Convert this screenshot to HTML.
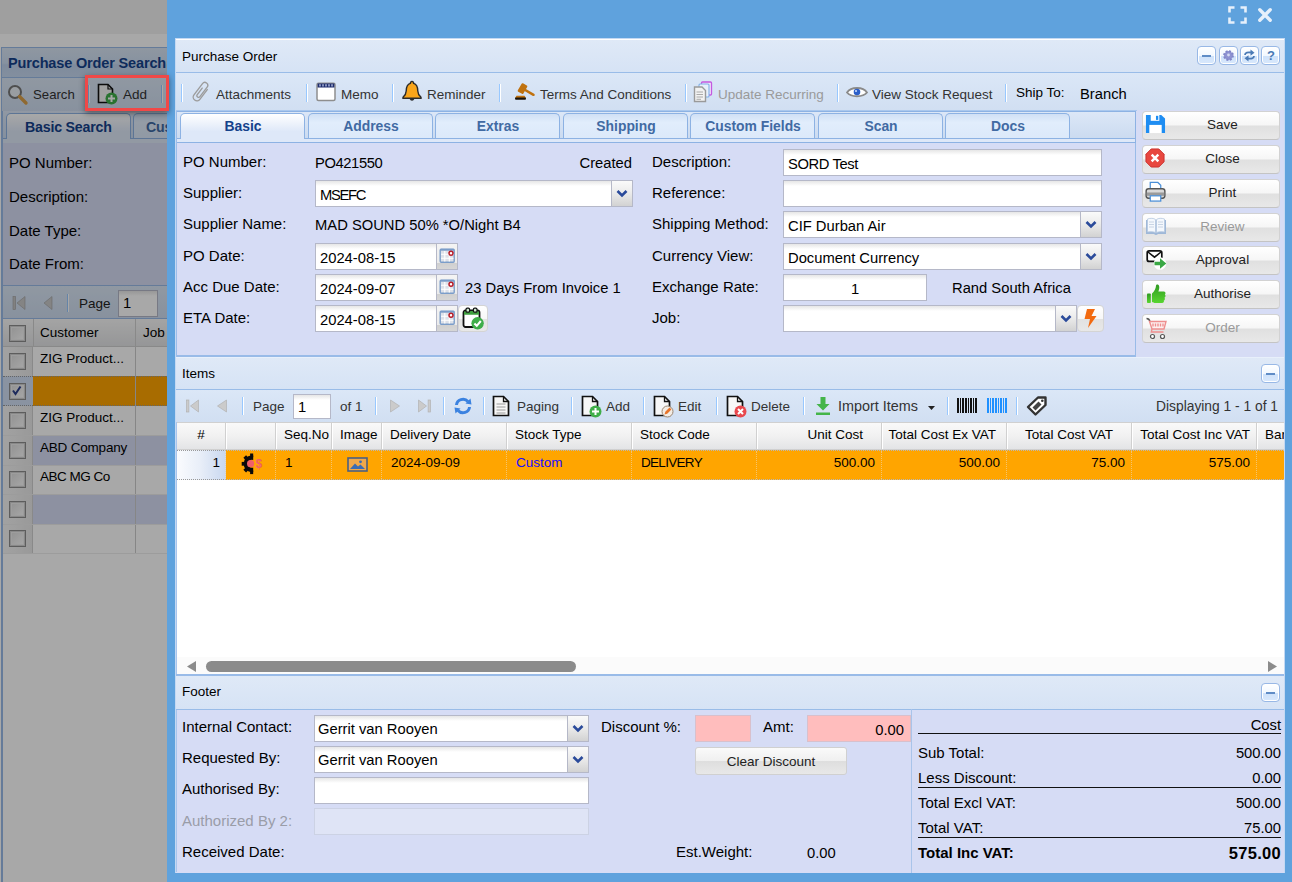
<!DOCTYPE html>
<html><head><meta charset="utf-8"><title>Purchase Order</title>
<style>
*{box-sizing:border-box;margin:0;padding:0}
html,body{width:1292px;height:882px;overflow:hidden}
body{background:#a8a8a8;font-family:"Liberation Sans",sans-serif;font-size:13.5px;color:#000;position:relative}
.abs{position:absolute}
.t{position:absolute;white-space:nowrap;line-height:1}
.lbl{position:absolute;white-space:nowrap;font-size:15px;line-height:18px;color:#000}
.val{position:absolute;white-space:nowrap;font-size:14.75px;line-height:18px}
.inp{position:absolute;background:#fff;border:1px solid #b5b8c8;height:27px;font-size:14.75px;line-height:28px;padding-left:4px;white-space:nowrap;background-image:linear-gradient(#e6e6e6,#fff 5px)}
.trg{position:absolute;width:21px;height:25px;right:0;top:0;border-left:1px solid #b5b8c8;background:linear-gradient(#fafafa,#ececec 45%,#d2d2d2)}
.sep{position:absolute;width:2px;height:18px;border-left:1px solid #98c8ff;border-right:1px solid #fff}
/* modal */
#modal{left:167px;top:0;width:1125px;height:882px;background:#5fa2dd}
#panel{left:176px;top:39px;width:1108px;height:834px;background:#d6dcf5;overflow:hidden}
.hdr{position:absolute;left:0;width:1108px;height:33px;background:linear-gradient(#dfe9f7,#d6e3f5);border-bottom:1px solid #99bce8;border-top:1px solid #e8f0fb;font-size:13.5px}
.tb{position:absolute;left:0;width:1108px;background:#d3e1f4;}
.tool{position:absolute;width:19px;height:19px;border:1px solid #98b8e6;border-radius:4px;background:linear-gradient(#fff,#f2f8ff 50%,#cfe2fa 55%,#d8e8fc);box-shadow:inset 0 0 0 1px #fff}

.hl{left:3px;width:170px;height:1px;background:#ededed}
.cb{position:absolute;left:9px;width:17px;height:17px;border:1px solid #8e8e8e;background:linear-gradient(135deg,#dcdcdc,#fff);box-shadow:inset 0 0 0 1px #cfcfcf,inset 0 0 0 2px #efefef}
.tabA{border:1px solid #8db2e3;border-bottom:none;border-radius:5px 5px 0 0;background:linear-gradient(#fff,#dee8f8 70%)}
.tabI{border:1px solid #8db2e3;border-bottom:none;border-radius:5px 5px 0 0;background:linear-gradient(#d0e0f5,#e1edfc 35%,#dce9fa)}

.tbt{font-size:13.5px;color:#333}
.tabt{top:81px;width:126px;text-align:center;font-weight:bold;font-size:13.9px;color:#416aa3}
.rbtn{position:absolute;left:966px;width:138px;height:29px;border:1px solid #d2d2d2;border-bottom-color:#c4c4c4;border-radius:4px;background:linear-gradient(#ffffff,#f6f6f6 48%,#e0e0e0 52%,#e8e8e8);}

.cal{background:linear-gradient(#f4f4f4,#ebebeb 76%,#d0d0d0 78%,#d6d6d6)}
.ibtn{position:absolute;height:27px;border:1px solid #d4d4d4;border-radius:4px;background:linear-gradient(#ffffff,#f7f7f7 50%,#e2e2e2 54%,#e8e8e8)}

.gt{font-size:13.5px;color:#000}
</style></head><body>
<!-- LEFT BACKGROUND (dimmed page) -->
<div class="abs" style="left:0;top:0;width:167px;height:882px;background:#fff"></div><div class="abs" style="left:0;top:0;width:167px;height:34px;background:#f2f2f2"></div>
<div class="abs" style="left:1px;top:47px;width:170px;height:835px;background:#fff;border-left:2px solid #99bbe8;border-top:1px solid #99bbe8"></div>
<!-- title -->
<div class="abs" style="left:2px;top:48px;width:170px;height:30px;background:linear-gradient(#dae6f4,#cddef3 52%,#c0d4ee 58%,#c7d9f1);border-bottom:1px solid #99bbe8"></div>
<div class="t" style="left:8px;top:56px;font-weight:bold;font-size:14.5px;color:#15428b;letter-spacing:-0.15px">Purchase Order Search</div>
<!-- toolbar -->
<div class="abs" style="left:2px;top:78px;width:170px;height:34px;background:linear-gradient(#dbe7f6,#cfddf0);border-bottom:1px solid #99bbe8"></div>
<svg class="abs" style="left:7px;top:84px" width="22" height="22" viewBox="0 0 22 22"><circle cx="8" cy="8" r="6" fill="#e8eef4" stroke="#777" stroke-width="2"/><path d="M12.5 12.5 L19 19" stroke="#d9a04a" stroke-width="3.4" stroke-linecap="round"/></svg>
<div class="t" style="left:33px;top:88px;font-size:13.2px;color:#333">Search</div>
<div class="sep" style="left:88px;top:85px"></div>
<svg class="abs" style="left:97px;top:83px" width="22" height="22" viewBox="0 0 22 22"><path d="M1.5 1.5 H11 L15.5 6 V19.5 H1.5 Z" fill="#f4f4f4" stroke="#111" stroke-width="1.6"/><path d="M11 1.5 V6 H15.5" fill="none" stroke="#111" stroke-width="1.2"/><circle cx="14.5" cy="15.5" r="6" fill="#3fae49"/><path d="M14.5 12 V19 M11 15.5 H18" stroke="#fff" stroke-width="2"/></svg>
<div class="t" style="left:123px;top:88px;font-size:13.5px;color:#333">Add</div>
<div class="sep" style="left:161px;top:85px"></div>
<!-- tabs strip -->
<div class="abs" style="left:3px;top:111px;width:170px;height:32px;background:linear-gradient(#dce7f7,#cbdbf0 85%);border-bottom:1px solid #8db2e3"></div>
<div class="abs" style="left:3px;top:138px;width:170px;height:6px;background:#dee8f8;border-top:1px solid #8db2e3;border-bottom:1px solid #8db2e3"></div>
<div class="abs tabA" style="left:6px;top:113px;width:125px;height:26px"></div>
<div class="t" style="left:25px;top:120px;font-weight:bold;font-size:14.2px;color:#15428b;letter-spacing:-0.2px">Basic Search</div>
<div class="abs tabI" style="left:133px;top:113px;width:125px;height:25px"></div>
<div class="t" style="left:146px;top:120px;font-weight:bold;font-size:14.2px;color:#416aa3;letter-spacing:-0.2px">Cus</div>
<!-- form body -->
<div class="abs" style="left:3px;top:143px;width:170px;height:144px;background:#d6dcf5;border-bottom:2px solid #99bbe8"></div>
<div class="lbl" style="left:9px;top:154px">PO Number:</div>
<div class="lbl" style="left:9px;top:188px">Description:</div>
<div class="lbl" style="left:9px;top:222px">Date Type:</div>
<div class="lbl" style="left:9px;top:255px">Date From:</div>
<!-- paging toolbar -->
<div class="abs" style="left:3px;top:286px;width:170px;height:33px;background:linear-gradient(#dbe7f6,#cfddf0);border-bottom:1px solid #99bbe8"></div>
<svg class="abs" style="left:12px;top:295px" width="16" height="16" viewBox="0 0 16 16"><rect x="1" y="1.5" width="2.6" height="13" fill="#c4c4c4" stroke="#a0a0a0" stroke-width=".6"/><path d="M13 1.5 V14.5 L5 8 Z" fill="#c8c8c8" stroke="#a0a0a0" stroke-width=".6"/></svg>
<svg class="abs" style="left:41px;top:295px" width="16" height="16" viewBox="0 0 16 16"><path d="M11 1.5 V14.5 L3 8 Z" fill="#c8c8c8" stroke="#a0a0a0" stroke-width=".6"/></svg>
<div class="sep" style="left:67px;top:294px"></div>
<div class="t" style="left:79px;top:297px;font-size:13.5px;color:#222">Page</div>
<div class="inp" style="left:118px;top:290px;width:40px;height:27px;line-height:25px">1</div>
<!-- grid header -->
<div class="abs" style="left:3px;top:319px;width:170px;height:28px;background:linear-gradient(#f9f9f9,#e3e4e6);border-bottom:1px solid #d0d0d0"></div>
<div class="abs" style="left:33px;top:319px;width:1px;height:28px;background:#d0d0d0"></div>
<div class="abs" style="left:135px;top:319px;width:1px;height:28px;background:#d0d0d0"></div>
<div class="t" style="left:40px;top:326px;font-size:13.5px">Customer</div>
<div class="t" style="left:143px;top:326px;font-size:13.5px">Job</div>
<!-- rows -->
<div class="abs" style="left:3px;top:347px;width:170px;height:207px;background:#fff"></div>
<div class="abs" style="left:3px;top:376px;width:170px;height:30px;background:#ffa500;border-top:1px dotted #999;border-bottom:1px dotted #999"></div>
<div class="abs" style="left:3px;top:436px;width:170px;height:30px;background:#d6dcf5"></div>
<div class="abs" style="left:3px;top:495px;width:170px;height:30px;background:#d6dcf5"></div>
<div class="abs" style="left:3px;top:347px;width:30px;height:207px;background:linear-gradient(90deg,#f6f6f6,#e9e9e9);border-right:1px solid #d0d0d0"></div><div class="abs" style="left:3px;top:376px;width:30px;height:30px;background:#d2e0f4;border-top:1px dotted #999;border-bottom:1px dotted #999"></div>
<div class="abs" style="left:135px;top:347px;width:1px;height:207px;background:#cccccc"></div>
<div class="abs hl" style="top:435px"></div><div class="abs hl" style="top:465px"></div><div class="abs hl" style="top:494px"></div><div class="abs hl" style="top:524px"></div><div class="abs hl" style="top:553px"></div>
<div class="t" style="left:40px;top:352px;font-size:13.5px">ZIG Product...</div>
<div class="t" style="left:40px;top:411px;font-size:13.5px">ZIG Product...</div>
<div class="t" style="left:40px;top:441px;font-size:13.5px"><span style="letter-spacing:-0.2px">ABD Company</span></div>
<div class="t" style="left:40px;top:470px;font-size:13.5px"><span style="letter-spacing:-0.5px">ABC MG Co</span></div>
<div class="cb" style="top:325px"></div><div class="cb" style="top:353px"></div>
<div class="cb" style="top:383px"><svg width="14" height="14" viewBox="0 0 14 14" style="position:absolute;left:0;top:0"><path d="M3 6.5 L5.5 10 L10.5 2.5" fill="none" stroke="#2b3f8c" stroke-width="2"/></svg></div>
<div class="cb" style="top:412px"></div><div class="cb" style="top:442px"></div><div class="cb" style="top:471px"></div><div class="cb" style="top:501px"></div><div class="cb" style="top:530px"></div>
<!-- overlay -->
<div class="abs" style="left:0;top:0;width:167px;height:882px;background:rgba(0,0,0,0.34)"></div>
<!-- red highlight -->
<div class="abs" style="left:85px;top:75px;width:84px;height:36px;border:3px solid #f04848;box-shadow:0 2px 6px rgba(0,0,0,.45);z-index:5"></div>

<!-- MODAL -->
<div class="abs" id="modal"></div><div class="abs" style="left:175px;top:38px;width:1110px;height:835px;background:#c4d9f3"></div>
<svg class="abs" style="left:1228px;top:6px" width="19" height="18" viewBox="0 0 19 18"><path d="M1.500 6.500 V1.500 H6.500 M12.500 1.500 H17.500 V6.500 M17.500 11.500 V16.500 H12.500 M6.500 16.500 H1.500 V11.500" fill="none" stroke="#e6f0fb" stroke-width="2.600"/></svg><svg class="abs" style="left:1257px;top:7px" width="16" height="16" viewBox="0 0 16 16"><path d="M2.800 2.800 L13.200 13.200 M13.200 2.800 L2.800 13.200" stroke="#e6f0fb" stroke-width="3.400" stroke-linecap="round"/></svg>
<div class="abs" id="panel">
<!-- header -->
<div class="hdr" style="top:0;height:34px;border-top:1px solid #fff"></div>
<div class="t" style="left:6px;top:11px;font-size:13.5px">Purchase Order</div>
<div class="tool" style="left:1021px;top:7px"><div class="abs" style="left:4px;top:8px;width:9px;height:2px;background:#5f8cc6"></div></div>
<div class="tool" style="left:1043px;top:7px"><svg class="abs" style="left:2px;top:2px" width="13" height="13" viewBox="0 0 13 13"><circle cx="6.5" cy="6.5" r="4.4" fill="#8f93d2" stroke="#8186c8" stroke-width="2" stroke-dasharray="2 1.45"/><circle cx="6.5" cy="6" r="1.4" fill="#d5daf2"/></svg></div>
<div class="tool" style="left:1064px;top:7px"><svg class="abs" style="left:2px;top:2px" width="13" height="13" viewBox="0 0 13 13"><path d="M2 6 C2 3.500 5 3 8 3.500" fill="none" stroke="#4a7ab5" stroke-width="1.800"/><path d="M7.500 0.500 L11.500 3.800 L7.500 6.800 Z" fill="#4a7ab5"/><path d="M11 7 C11 9.500 8 10 5 9.500" fill="none" stroke="#4a7ab5" stroke-width="1.800"/><path d="M5.500 6.200 L1.500 9.200 L5.500 12.500 Z" fill="#4a7ab5"/></svg></div>
<div class="tool" style="left:1085px;top:7px"><div class="t" style="left:5px;top:2px;font-size:13px;font-weight:bold;color:#4a7ab5">?</div></div>
<!-- toolbar -->
<div class="tb" style="top:34px;height:38px;background:linear-gradient(#dbe7f7,#d1dff2);border-bottom:1px solid #aac8ee"></div>
<div class="sep" style="left:5px;top:45px"></div>
<div class="t tbt" style="left:40px;top:49px">Attachments</div>
<div class="sep" style="left:130px;top:45px"></div>
<div class="t tbt" style="left:165px;top:49px">Memo</div>
<div class="sep" style="left:216px;top:45px"></div>
<div class="t tbt" style="left:251px;top:49px">Reminder</div>
<div class="sep" style="left:323px;top:45px"></div>
<div class="t tbt" style="left:364px;top:49px">Terms And Conditions</div>
<div class="sep" style="left:509px;top:45px"></div>
<div class="t tbt" style="left:542px;top:49px;color:#9a9a9a">Update Recurring</div>
<div class="sep" style="left:661px;top:45px"></div>
<div class="t tbt" style="left:696px;top:49px">View Stock Request</div>
<div class="sep" style="left:829px;top:45px"></div>
<div class="t" style="left:840px;top:47px;font-size:13.5px">Ship To:</div>
<div class="t" style="left:904px;top:48px;font-size:14.75px">Branch</div>
<svg class="abs" style="left:14px;top:42px" width="22" height="22" viewBox="0 0 22 22"><g transform="translate(11,10.700) rotate(37)"><path d="M3.700 -5.500 L3.700 6.800 A3.700 3.700 0 0 1 -3.700 6.800 L-3.700 -7.400 A2.900 2.900 0 0 1 2.100 -7.400 L2.100 4.600 A1.650 1.650 0 0 1 -1.200 4.600 L-1.200 -3.600" fill="none" stroke="#9c9c9c" stroke-width="1.350" stroke-linecap="round"/></g></svg><svg class="abs" style="left:140px;top:43px" width="20" height="20" viewBox="0 0 20 20"><rect x="1" y="1.2" width="18" height="17.3" rx="1.5" fill="#fff" stroke="#8e8e8e" stroke-width="1.5"/><rect x="1.6" y="1.5" width="16.8" height="4" fill="#1e2d6e"/><path d="M4 2.2 V4.6 M7 2.2 V4.6 M10 2.2 V4.6 M13 2.2 V4.6 M16 2.2 V4.6" stroke="#dfe6ff" stroke-width="1.1"/></svg><svg class="abs" style="left:225px;top:41px" width="22" height="23" viewBox="0 0 22 23"><path d="M11 1.5 C9.8 1.5 9.3 2.4 9.4 3.4 C6.2 4.4 5.2 7.5 5.2 11 C5.2 14 3.8 15.6 2 17.2 L2 18.3 H20 V17.2 C18.2 15.6 16.8 14 16.8 11 C16.8 7.5 15.8 4.4 12.6 3.4 C12.7 2.4 12.2 1.5 11 1.5 Z" fill="#f9a51a" stroke="#2a2a2a" stroke-width="1.4"/><path d="M8.7 19 A2.4 2.4 0 0 0 13.3 19 Z" fill="#2a2a2a"/></svg><svg class="abs" style="left:337px;top:42px" width="23" height="21" viewBox="0 0 23 21"><rect x="-3.200" y="-4.800" width="6.400" height="9.600" rx="1" fill="#c0720f" transform="translate(9.500,7.600) rotate(30)"/><path d="M10.500 8 L20.500 13.800" stroke="#c0720f" stroke-width="2.500" stroke-linecap="round"/><path d="M3.500 14.800 H11.500 L13 17 H2 Z" fill="#c0720f"/><rect x="2" y="16.600" width="11" height="2.200" rx="1" fill="#1a1208"/></svg><svg class="abs" style="left:517px;top:42px" width="21" height="22" viewBox="0 0 21 22"><rect x="8.5" y="1" width="10" height="13" rx="1" fill="#f0e6fb" stroke="#c45ae0" stroke-width="1.3"/><rect x="6" y="3" width="10" height="13" rx="1" fill="#e8f0fb" stroke="#7fb0e8" stroke-width="1.1"/><path d="M1.5 6 H9 L12.5 9.5 V20.5 H1.5 Z" fill="#f2f2f2" stroke="#9a9a9a" stroke-width="1.4"/><path d="M3.5 11 H10 M3.5 13.5 H10 M3.5 16 H10 M3.5 18.3 H8" stroke="#aaa" stroke-width="1"/></svg><svg class="abs" style="left:670px;top:47px" width="22" height="13" viewBox="0 0 22 13"><path d="M1 6.5 C5 0.5 17 0.5 21 6.5 C17 11.5 5 11.5 1 6.5 Z" fill="#fff" stroke="#8a8a8a" stroke-width="1.8"/><circle cx="11" cy="6" r="3.3" fill="#2c5fc9"/><circle cx="10" cy="5" r="1" fill="#cfe0ff"/></svg>
<!-- tab strip -->
<div class="abs" style="left:0;top:72px;width:960px;height:32px;background:linear-gradient(#dce7f7,#cbdbf0 85%);border-right:1px solid #8db2e3;border-top:1px solid #8db2e3"></div>
<div class="abs" style="left:0;top:99px;width:960px;height:5px;background:#dee8f8;border-top:1px solid #8db2e3;border-bottom:1px solid #8db2e3;border-right:1px solid #8db2e3"></div>
<div class="abs tabA" style="left:4px;top:74px;width:125px;height:26px"></div>
<div class="abs tabI" style="left:132px;top:74px;width:125px;height:25px"></div>
<div class="abs tabI" style="left:259px;top:74px;width:125px;height:25px"></div>
<div class="abs tabI" style="left:387px;top:74px;width:125px;height:25px"></div>
<div class="abs tabI" style="left:514px;top:74px;width:125px;height:25px"></div>
<div class="abs tabI" style="left:642px;top:74px;width:125px;height:25px"></div>
<div class="abs tabI" style="left:769px;top:74px;width:125px;height:25px"></div>
<div class="t tabt" style="left:4px;color:#15428b">Basic</div>
<div class="t tabt" style="left:132px">Address</div>
<div class="t tabt" style="left:259px">Extras</div>
<div class="t tabt" style="left:387px">Shipping</div>
<div class="t tabt" style="left:514px">Custom Fields</div>
<div class="t tabt" style="left:642px">Scan</div>
<div class="t tabt" style="left:769px">Docs</div>
<!-- form body -->
<div class="abs" style="left:0;top:104px;width:960px;height:214px;background:#d6dcf5;border-right:1px solid #99bbe8;border-bottom:2px solid #99bbe8"></div>
<!-- right buttons column -->
<div class="abs" style="left:961px;top:71px;width:147px;height:247px;background:#d6dcf5"></div>
<div class="rbtn" style="top:72px"><div class="t" style="left:0;width:138px;padding-left:21px;text-align:center;top:6px;font-size:13.5px;color:#222">Save</div><svg class="abs" style="left:2px;top:2px" width="21" height="20" viewBox="0 0 22 22" preserveAspectRatio="none"><path d="M1 1 H17 L21 5 V21 H1 Z" fill="#1e8df2"/><rect x="4.5" y="12" width="13" height="9" fill="#fff"/><rect x="6" y="1" width="9" height="6.5" fill="#fff"/><rect x="11.5" y="2" width="2.4" height="4.5" fill="#1e8df2"/></svg></div>
<div class="rbtn" style="top:106px"><div class="t" style="left:0;width:138px;padding-left:21px;text-align:center;top:6px;font-size:13.5px;color:#222">Close</div><svg class="abs" style="left:2px;top:2px" width="20" height="20" viewBox="0 0 21 21"><path d="M6.5 1 H14.5 L20 6.5 V14.5 L14.5 20 H6.5 L1 14.5 V6.5 Z" fill="#e8473f" stroke="#c9302c" stroke-width="1"/><path d="M7 7 L14 14 M14 7 L7 14" stroke="#fff" stroke-width="2.6"/></svg></div>
<div class="rbtn" style="top:140px"><div class="t" style="left:0;width:138px;padding-left:21px;text-align:center;top:6px;font-size:13.5px;color:#222">Print</div><svg class="abs" style="left:2px;top:1px" width="21" height="22" viewBox="0 0 22 23"><path d="M5.5 8 V1.5 H13.5 L16.5 4.5 V8" fill="#fff" stroke="#4a8fd8" stroke-width="1.3"/><rect x="1.2" y="8" width="19.6" height="10" rx="2.5" fill="#d9d9d9" stroke="#555" stroke-width="1.5"/><rect x="1.8" y="12" width="18.4" height="3.5" fill="#9a9a9a"/><rect x="5.5" y="15.5" width="11" height="5.5" fill="#fff" stroke="#4a8fd8" stroke-width="1.3"/></svg></div>
<div class="rbtn" style="top:174px"><div class="t" style="left:0;width:138px;padding-left:21px;text-align:center;top:6px;font-size:13.5px;color:#9a9a9a">Review</div><svg class="abs" style="left:2px;top:3px" width="22" height="20" viewBox="0 0 22 20"><path d="M1 3 H21 V17 H13 Q11 19 9 17 H1 Z" fill="#9fb8d8"/><path d="M2.5 2 C5.5 1 8.5 1 10.5 2.5 V15.5 C8.5 14.5 5.5 14.5 2.5 15 Z M19.5 2 C16.5 1 13.5 1 11.5 2.5 V15.5 C13.5 14.5 16.5 14.5 19.5 15 Z" fill="#f4f8fd" stroke="#b5c8e0" stroke-width=".8"/><path d="M4 5 H9 M4 7.5 H9 M4 10 H9 M13 5 H18 M13 7.5 H18 M13 10 H18" stroke="#c8d4e4" stroke-width="1"/></svg></div>
<div class="rbtn" style="top:207px"><div class="t" style="left:0;width:138px;padding-left:21px;text-align:center;top:6px;font-size:13.5px;color:#222">Approval</div><svg class="abs" style="left:3px;top:2px" width="22" height="22" viewBox="0 0 22 22"><rect x="1.2" y="1.8" width="14.6" height="10.6" rx="2" fill="#fff" stroke="#111" stroke-width="1.7"/><path d="M2 3 L8.5 8.2 L15 3" fill="none" stroke="#111" stroke-width="1.6"/><circle cx="14" cy="14.5" r="6.3" fill="#fff"/><path d="M8.5 12.7 H14 V9.3 L20.3 14.5 L14 19.7 V16.3 H8.5 Z" fill="#3aa845"/></svg></div>
<div class="rbtn" style="top:241px"><div class="t" style="left:0;width:138px;padding-left:21px;text-align:center;top:6px;font-size:13.5px;color:#222">Authorise</div><svg class="abs" style="left:3px;top:2px" width="21" height="22" viewBox="0 0 21 22"><defs><linearGradient id="gth" x1="0" y1="0" x2="0" y2="1"><stop offset="0" stop-color="#2f9a22"/><stop offset="1" stop-color="#58d62f"/></linearGradient></defs><rect x="1" y="10.5" width="3.8" height="9.5" rx=".8" fill="url(#gth)"/><path d="M6 10.5 C8.5 8.5 9.8 5.5 10 2.8 C10.1 1.2 12.8 1 13.2 3.5 C13.5 5.3 13 7 12.4 8.5 H17.5 C19.8 8.5 20 11 18.8 11.6 C20 12.5 19.6 14.3 18.5 14.7 C19.3 15.7 18.8 17.2 17.8 17.5 C18.3 18.7 17.6 20 16 20 H9.5 C8 20 7 19.3 6 19 Z" fill="url(#gth)"/></svg></div>
<div class="rbtn" style="top:275px"><div class="t" style="left:0;width:138px;padding-left:21px;text-align:center;top:6px;font-size:13.5px;color:#9a9a9a">Order</div><svg class="abs" style="left:2px;top:2px" width="23" height="23" viewBox="0 0 23 23"><path d="M1.5 1.5 C4 1.5 4.5 2.5 5 4.5" fill="none" stroke="#555" stroke-width="1.3"/><path d="M4.5 4.5 H21 L19 12 H7 Z" fill="#fdf0f0" stroke="#ee8f8f" stroke-width="1.4"/><path d="M8 6.5 V9.5 M10.5 6.5 V9.5 M13 6.5 V9.5 M15.500 6.5 V9.5 M18 6.5 V9.500" stroke="#ee8f8f" stroke-width="1.400"/><path d="M7 12 L6.300 15 H18.500" fill="none" stroke="#ee8f8f" stroke-width="1.300"/><circle cx="7.500" cy="19.500" r="2" fill="#fff" stroke="#555" stroke-width="1.200"/><circle cx="17.500" cy="19.500" r="2" fill="#fff" stroke="#555" stroke-width="1.200"/></svg></div>

<!-- form fields -->
<div class="lbl" style="left:7px;top:114px">PO Number:</div><div class="lbl" style="left:476px;top:114px">Description:</div>
<div class="lbl" style="left:7px;top:145px">Supplier:</div><div class="lbl" style="left:476px;top:145px">Reference:</div>
<div class="lbl" style="left:7px;top:176px">Supplier Name:</div><div class="lbl" style="left:476px;top:176px">Shipping Method:</div>
<div class="lbl" style="left:7px;top:208px">PO Date:</div><div class="lbl" style="left:476px;top:208px">Currency View:</div>
<div class="lbl" style="left:7px;top:239px">Acc Due Date:</div><div class="lbl" style="left:476px;top:239px">Exchange Rate:</div>
<div class="lbl" style="left:7px;top:270px">ETA Date:</div><div class="lbl" style="left:476px;top:270px">Job:</div>
<div class="val" style="left:139px;top:115px"><span style="letter-spacing:-0.4px">PO421550</span></div>
<div class="val" style="right:652px;top:115px">Created</div>
<div class="inp" style="left:139px;top:141px;width:318px"><span style="letter-spacing:-1.3px">MSEFC</span><div class="trg"><svg width="20" height="25" viewBox="0 0 20 25"><path d="M5.5 10 L10 14.5 L14.5 10" fill="none" stroke="#2a4a9a" stroke-width="2.6"/></svg></div></div>
<div class="val" style="left:139px;top:177px">MAD SOUND 50% *O/Night B4</div>
<div class="inp" style="left:139px;top:204px;width:143px">2024-08-15<div class="trg cal"><svg width="21" height="25" viewBox="0 0 21 25"><rect x="3.200" y="5.200" width="14" height="13" rx="1" fill="#dde1e9" stroke="#7b9dc9" stroke-width="1.400"/><path d="M3.200 5.800 H17.200" stroke="#7b9dc9" stroke-width="1.800"/><path d="M4 10.200 H16.500 M4 14.200 H16.500 M7.800 7 V17.500 M12.300 7 V17.500" stroke="#fff" stroke-width="1.100"/><circle cx="14" cy="9.300" r="2" fill="#fff" stroke="#b81c28" stroke-width="1.500"/></svg></div></div>
<div class="inp" style="left:139px;top:235px;width:143px">2024-09-07<div class="trg cal"><svg width="21" height="25" viewBox="0 0 21 25"><rect x="3.200" y="5.200" width="14" height="13" rx="1" fill="#dde1e9" stroke="#7b9dc9" stroke-width="1.400"/><path d="M3.200 5.800 H17.200" stroke="#7b9dc9" stroke-width="1.800"/><path d="M4 10.200 H16.500 M4 14.200 H16.500 M7.800 7 V17.500 M12.300 7 V17.500" stroke="#fff" stroke-width="1.100"/><circle cx="14" cy="9.300" r="2" fill="#fff" stroke="#b81c28" stroke-width="1.500"/></svg></div></div>
<div class="val" style="left:289px;top:240px">23 Days From Invoice 1</div>
<div class="inp" style="left:139px;top:266px;width:143px">2024-08-15<div class="trg cal"><svg width="21" height="25" viewBox="0 0 21 25"><rect x="3.200" y="5.200" width="14" height="13" rx="1" fill="#dde1e9" stroke="#7b9dc9" stroke-width="1.400"/><path d="M3.200 5.800 H17.200" stroke="#7b9dc9" stroke-width="1.800"/><path d="M4 10.200 H16.500 M4 14.200 H16.500 M7.800 7 V17.500 M12.300 7 V17.500" stroke="#fff" stroke-width="1.100"/><circle cx="14" cy="9.300" r="2" fill="#fff" stroke="#b81c28" stroke-width="1.500"/></svg></div></div>
<div class="ibtn" style="left:282px;top:266px;width:30px"><svg width="28" height="25" viewBox="0 0 28 25" style="position:absolute;left:0;top:0"><rect x="4.500" y="4.500" width="16" height="16.500" rx="2" fill="#fff" stroke="#111" stroke-width="1.800"/><path d="M5 8.800 V6.500 Q5 5 6.500 5 H18.500 Q20 5 20 6.500 V8.800 Z" fill="#3e9e3e"/><rect x="7" y="2.200" width="3.600" height="4" rx="1.200" fill="#cfe8cf" stroke="#111" stroke-width="1.200"/><rect x="14.400" y="2.200" width="3.600" height="4" rx="1.200" fill="#cfe8cf" stroke="#111" stroke-width="1.200"/><circle cx="18.600" cy="17.300" r="6.200" fill="#3fae49"/><path d="M15.400 17.400 L17.800 19.800 L21.800 15" fill="none" stroke="#fff" stroke-width="2.100"/></svg></div>
<div class="inp" style="left:607px;top:110px;width:319px"><span style="letter-spacing:-0.4px">SORD Test</span></div>
<div class="inp" style="left:607px;top:141px;width:319px"></div>
<div class="inp" style="left:607px;top:172px;width:319px">CIF Durban Air<div class="trg"><svg width="20" height="25" viewBox="0 0 20 25"><path d="M5.5 10 L10 14.5 L14.5 10" fill="none" stroke="#2a4a9a" stroke-width="2.6"/></svg></div></div>
<div class="inp" style="left:607px;top:204px;width:319px">Document Currency<div class="trg"><svg width="20" height="25" viewBox="0 0 20 25"><path d="M5.5 10 L10 14.5 L14.5 10" fill="none" stroke="#2a4a9a" stroke-width="2.6"/></svg></div></div>
<div class="inp" style="left:607px;top:235px;width:144px;text-align:center;padding-left:0">1</div>
<div class="val" style="left:776px;top:240px">Rand South Africa</div>
<div class="inp" style="left:607px;top:266px;width:294px"><div class="trg"><svg width="20" height="25" viewBox="0 0 20 25"><path d="M5.5 10 L10 14.5 L14.5 10" fill="none" stroke="#2a4a9a" stroke-width="2.6"/></svg></div></div>
<div class="ibtn" style="left:901px;top:266px;width:27px"><svg width="25" height="25" viewBox="0 0 25 25" style="position:absolute;left:0;top:0"><path d="M9 3 H17 L13.5 10 H18.5 L10 22 L12 13 H6.5 Z" fill="#f26a10"/></svg></div>

<!-- ITEMS -->
<div class="hdr" style="top:318px;height:33px"></div><div class="t" style="left:6px;top:328px;font-size:13.5px">Items</div>
<div class="tool" style="left:1085px;top:325px"><div class="abs" style="left:4px;top:8px;width:9px;height:2px;background:#5f8cc6"></div></div>
<div class="tb" style="top:351px;height:32px;background:linear-gradient(#dbe7f7,#d1dff2)"></div>
<svg class="abs" style="left:10px;top:360px" width="14" height="14" viewBox="0 0 14 14"><g><rect x="0.5" y="1" width="2.4" height="12" fill="#cbcbcb" stroke="#b2b2b2" stroke-width=".7"/><path d="M12.5 1 V13 L4.5 7 Z" fill="#cbcbcb" stroke="#b2b2b2" stroke-width=".7"/></g></svg><svg class="abs" style="left:40px;top:360px" width="12" height="14" viewBox="0 0 12 14"><g><path d="M10.5 1 V13 L1.5 7 Z" fill="#cbcbcb" stroke="#b2b2b2" stroke-width=".7"/></g></svg><div class="sep" style="left:66px;top:358px"></div><div class="t tbt" style="left:77px;top:361px">Page</div><div class="inp" style="left:117px;top:355px;width:38px;height:25px;line-height:24px">1</div><div class="t tbt" style="left:164px;top:361px">of 1</div><div class="sep" style="left:199px;top:358px"></div><svg class="abs" style="left:213px;top:360px" width="12" height="14" viewBox="0 0 12 14"><g transform="scale(-1,1) translate(-12,0)"><path d="M10.5 1 V13 L1.5 7 Z" fill="#cbcbcb" stroke="#b2b2b2" stroke-width=".7"/></g></svg><svg class="abs" style="left:241px;top:360px" width="14" height="14" viewBox="0 0 14 14"><g transform="scale(-1,1) translate(-14,0)"><rect x="0.5" y="1" width="2.4" height="12" fill="#cbcbcb" stroke="#b2b2b2" stroke-width=".7"/><path d="M12.5 1 V13 L4.5 7 Z" fill="#cbcbcb" stroke="#b2b2b2" stroke-width=".7"/></g></svg><div class="sep" style="left:267px;top:358px"></div><svg class="abs" style="left:277px;top:357px" width="20" height="20" viewBox="0 0 20 20"><path d="M3.5 9 A6.5 6 0 0 1 15 5.5" fill="none" stroke="#3b82e0" stroke-width="3"/><path d="M12.5 7.5 L18.5 8.5 L17.5 2.5 Z" fill="#3b82e0"/><path d="M16.5 11 A6.5 6 0 0 1 5 14.5" fill="none" stroke="#3b82e0" stroke-width="3"/><path d="M7.5 12.5 L1.5 11.5 L2.5 17.5 Z" fill="#3b82e0"/></svg><div class="sep" style="left:307px;top:358px"></div><svg class="abs" style="left:316px;top:356px" width="22" height="23" viewBox="0 0 22 23"><path d="M1.5 1.5 H11.5 L16.5 6.5 V20.5 H1.5 Z" fill="#f7f7f7" stroke="#111" stroke-width="1.7"/><path d="M11.5 1.5 V6.5 H16.5" fill="none" stroke="#111" stroke-width="1.3"/><path d="M4.5 9 H13.5 M4.5 12 H13.5 M4.5 15 H13.5 M4.5 18 H13.5" stroke="#9a9a9a" stroke-width="1"/></svg><div class="t tbt" style="left:341px;top:361px">Paging</div><div class="sep" style="left:395px;top:358px"></div><svg class="abs" style="left:405px;top:356px" width="22" height="23" viewBox="0 0 22 23"><path d="M1.5 1.5 H11.5 L16.5 6.5 V20.5 H1.5 Z" fill="#f7f7f7" stroke="#111" stroke-width="1.7"/><path d="M11.5 1.5 V6.5 H16.5" fill="none" stroke="#111" stroke-width="1.3"/><circle cx="14.5" cy="16.5" r="6" fill="#3fae49"/><path d="M14.5 13 V20 M11 16.5 H18" stroke="#fff" stroke-width="2"/></svg><div class="t tbt" style="left:430px;top:361px">Add</div><div class="sep" style="left:467px;top:358px"></div><svg class="abs" style="left:477px;top:356px" width="22" height="23" viewBox="0 0 22 23"><path d="M1.5 1.5 H11.5 L16.5 6.5 V20.5 H1.5 Z" fill="#f7f7f7" stroke="#111" stroke-width="1.7"/><path d="M11.5 1.5 V6.5 H16.5" fill="none" stroke="#111" stroke-width="1.3"/><circle cx="14.5" cy="16.5" r="5.5" fill="#f3ece4" stroke="#9a8570" stroke-width="1"/><path d="M11.5 19.5 L12.3 16.8 L16.5 12.6 L18.4 14.5 L14.2 18.7 Z" fill="#e8742a"/></svg><div class="t tbt" style="left:502px;top:361px">Edit</div><div class="sep" style="left:540px;top:358px"></div><svg class="abs" style="left:550px;top:356px" width="22" height="23" viewBox="0 0 22 23"><path d="M1.5 1.5 H11.5 L16.5 6.5 V20.5 H1.5 Z" fill="#f7f7f7" stroke="#111" stroke-width="1.7"/><path d="M11.5 1.5 V6.5 H16.5" fill="none" stroke="#111" stroke-width="1.3"/><circle cx="14.5" cy="16.5" r="6" fill="#e8484e"/><path d="M12 14 L17 19 M17 14 L12 19" stroke="#fff" stroke-width="2"/></svg><div class="t tbt" style="left:575px;top:361px">Delete</div><div class="sep" style="left:627px;top:358px"></div><svg class="abs" style="left:638px;top:357px" width="18" height="20" viewBox="0 0 18 20"><path d="M6.5 1 H11.5 V8 H15.5 L9 14.5 L2.5 8 H6.5 Z" fill="#44b549"/><path d="M2 16.5 H16 V19 H2 Z" fill="#44b549"/></svg><div class="t tbt" style="left:662px;top:360px;font-size:14.4px">Import Items</div><svg class="abs" style="left:752px;top:367px" width="7" height="4" viewBox="0 0 7 4"><path d="M0 0 H7 L3.500 4 Z" fill="#222"/></svg><div class="sep" style="left:771px;top:358px"></div><svg class="abs" style="left:781px;top:359px" width="20" height="15" viewBox="0 0 20 15" shape-rendering="crispEdges"><rect x="0" y="0" width="2" height="15" fill="#111"/><rect x="3" y="0" width="1" height="15" fill="#111"/><rect x="5" y="0" width="2" height="15" fill="#111"/><rect x="8" y="0" width="2" height="15" fill="#111"/><rect x="11" y="0" width="1" height="15" fill="#111"/><rect x="13" y="0" width="2" height="15" fill="#111"/><rect x="16" y="0" width="1" height="15" fill="#111"/><rect x="18" y="0" width="2" height="15" fill="#111"/></svg><svg class="abs" style="left:811px;top:359px" width="20" height="15" viewBox="0 0 20 15" shape-rendering="crispEdges"><rect x="0" y="0" width="2" height="15" fill="#1e90ff"/><rect x="3" y="0" width="1" height="15" fill="#1e90ff"/><rect x="5" y="0" width="2" height="15" fill="#1e90ff"/><rect x="8" y="0" width="2" height="15" fill="#1e90ff"/><rect x="11" y="0" width="1" height="15" fill="#1e90ff"/><rect x="13" y="0" width="2" height="15" fill="#1e90ff"/><rect x="16" y="0" width="1" height="15" fill="#1e90ff"/><rect x="18" y="0" width="2" height="15" fill="#1e90ff"/></svg><div class="sep" style="left:840px;top:358px"></div><svg class="abs" style="left:850px;top:356px" width="22" height="22" viewBox="0 0 22 22"><path d="M2 12 L12 2.5 L19.5 2.5 L19.5 10 L9.5 19.5 Z" fill="#fff" stroke="#333" stroke-width="2.4" stroke-linejoin="round"/><path d="M6.5 12.5 L12.5 6.5 L15.5 9.5 L9.5 15.5 Z" fill="#444"/><circle cx="16.3" cy="5.7" r="1.3" fill="#333"/></svg><div class="t tbt" style="right:6px;top:361px;font-size:13.8px">Displaying 1 - 1 of 1</div>
<div class="abs" style="left:0;top:383px;width:1108px;height:28px;background:linear-gradient(#f9f9f9,#f1f1f1 50%,#e3e4e6);border-top:1px solid #d0d0d0;border-bottom:1px solid #d0d0d0"></div>
<div class="abs" style="left:0;top:411px;width:1108px;height:207px;background:#fff"></div>
<div class="abs" style="left:0;top:411px;width:1108px;height:30px;background:#ffa500;border-top:1px dotted #b8b8b8;border-bottom:1px dotted #b8b8b8"></div>
<div class="abs" style="left:0;top:411px;width:50px;height:30px;background:linear-gradient(90deg,#fbfcfe,#e8eef8 50%,#c9d8f0);border-top:1px dotted #999;border-bottom:1px dotted #999;border-right:1px solid #d0d0d0"></div>
<div class="abs" style="left:49px;top:384px;width:1px;height:26px;background:#d0d0d0"></div><div class="abs" style="left:50px;top:384px;width:1px;height:26px;background:#fff"></div><div class="abs" style="left:49px;top:412px;width:0;height:28px;border-left:1px dotted rgba(235,235,235,.45)"></div><div class="abs" style="left:99px;top:384px;width:1px;height:26px;background:#d0d0d0"></div><div class="abs" style="left:100px;top:384px;width:1px;height:26px;background:#fff"></div><div class="abs" style="left:99px;top:412px;width:0;height:28px;border-left:1px dotted rgba(235,235,235,.45)"></div><div class="abs" style="left:155px;top:384px;width:1px;height:26px;background:#d0d0d0"></div><div class="abs" style="left:156px;top:384px;width:1px;height:26px;background:#fff"></div><div class="abs" style="left:155px;top:412px;width:0;height:28px;border-left:1px dotted rgba(235,235,235,.45)"></div><div class="abs" style="left:205px;top:384px;width:1px;height:26px;background:#d0d0d0"></div><div class="abs" style="left:206px;top:384px;width:1px;height:26px;background:#fff"></div><div class="abs" style="left:205px;top:412px;width:0;height:28px;border-left:1px dotted rgba(235,235,235,.45)"></div><div class="abs" style="left:330px;top:384px;width:1px;height:26px;background:#d0d0d0"></div><div class="abs" style="left:331px;top:384px;width:1px;height:26px;background:#fff"></div><div class="abs" style="left:330px;top:412px;width:0;height:28px;border-left:1px dotted rgba(235,235,235,.45)"></div><div class="abs" style="left:455px;top:384px;width:1px;height:26px;background:#d0d0d0"></div><div class="abs" style="left:456px;top:384px;width:1px;height:26px;background:#fff"></div><div class="abs" style="left:455px;top:412px;width:0;height:28px;border-left:1px dotted rgba(235,235,235,.45)"></div><div class="abs" style="left:580px;top:384px;width:1px;height:26px;background:#d0d0d0"></div><div class="abs" style="left:581px;top:384px;width:1px;height:26px;background:#fff"></div><div class="abs" style="left:580px;top:412px;width:0;height:28px;border-left:1px dotted rgba(235,235,235,.45)"></div><div class="abs" style="left:705px;top:384px;width:1px;height:26px;background:#d0d0d0"></div><div class="abs" style="left:706px;top:384px;width:1px;height:26px;background:#fff"></div><div class="abs" style="left:705px;top:412px;width:0;height:28px;border-left:1px dotted rgba(235,235,235,.45)"></div><div class="abs" style="left:830px;top:384px;width:1px;height:26px;background:#d0d0d0"></div><div class="abs" style="left:831px;top:384px;width:1px;height:26px;background:#fff"></div><div class="abs" style="left:830px;top:412px;width:0;height:28px;border-left:1px dotted rgba(235,235,235,.45)"></div><div class="abs" style="left:955px;top:384px;width:1px;height:26px;background:#d0d0d0"></div><div class="abs" style="left:956px;top:384px;width:1px;height:26px;background:#fff"></div><div class="abs" style="left:955px;top:412px;width:0;height:28px;border-left:1px dotted rgba(235,235,235,.45)"></div><div class="abs" style="left:1080px;top:384px;width:1px;height:26px;background:#d0d0d0"></div><div class="abs" style="left:1081px;top:384px;width:1px;height:26px;background:#fff"></div><div class="abs" style="left:1080px;top:412px;width:0;height:28px;border-left:1px dotted rgba(235,235,235,.45)"></div><div class="t gt" style="left:0;width:50px;text-align:center;top:389px">#</div><div class="t gt" style="left:108px;top:389px">Seq.No</div><div class="t gt" style="left:164px;top:389px">Image</div><div class="t gt" style="left:214px;top:389px">Delivery Date</div><div class="t gt" style="left:339px;top:389px">Stock Type</div><div class="t gt" style="left:464px;top:389px">Stock Code</div><div class="t gt" style="left:1089px;top:389px">Bar</div><div class="t gt" style="right:421px;top:389px">Unit Cost</div><div class="t gt" style="right:288px;top:389px">Total Cost Ex VAT</div><div class="t gt" style="right:171px;top:389px">Total Cost VAT</div><div class="t gt" style="right:34px;top:389px">Total Cost Inc VAT</div><div class="t gt" style="right:1064px;top:417px">1</div><div class="t gt" style="left:109px;top:417px;color:#000">1</div><div class="t gt" style="left:215px;top:417px;color:#000">2024-09-09</div><div class="t gt" style="left:340px;top:417px;color:#1a0dff">Custom</div><div class="t gt" style="left:465px;top:417px;color:#000"><span style="letter-spacing:-0.7px">DELIVERY</span></div><div class="t gt" style="right:409px;top:417px">500.00</div><div class="t gt" style="right:284px;top:417px">500.00</div><div class="t gt" style="right:159px;top:417px">75.00</div><div class="t gt" style="right:34px;top:417px">575.00</div><svg class="abs" style="left:64px;top:413px" width="24" height="24" viewBox="0 0 24 24"><defs><clipPath id="hg"><rect x="0" y="0" width="13.200" height="24"/></clipPath></defs><g clip-path="url(#hg)"><circle cx="12" cy="11.800" r="6.200" fill="none" stroke="#0a0a0a" stroke-width="4.400"/><g fill="#0a0a0a"><rect x="10.100" y="1.500" width="3.800" height="3.600" transform="rotate(0 12 11.800)"/><rect x="10.100" y="1.500" width="3.800" height="3.600" transform="rotate(45 12 11.800)"/><rect x="10.100" y="1.500" width="3.800" height="3.600" transform="rotate(90 12 11.800)"/><rect x="10.100" y="1.500" width="3.800" height="3.600" transform="rotate(135 12 11.800)"/><rect x="10.100" y="1.500" width="3.800" height="3.600" transform="rotate(180 12 11.800)"/><rect x="10.100" y="1.500" width="3.800" height="3.600" transform="rotate(225 12 11.800)"/><rect x="10.100" y="1.500" width="3.800" height="3.600" transform="rotate(270 12 11.800)"/><rect x="10.100" y="1.500" width="3.800" height="3.600" transform="rotate(315 12 11.800)"/></g></g><circle cx="10.600" cy="11.700" r="3.600" fill="#f0606a"/><text x="15.600" y="16.200" font-family="Liberation Sans,sans-serif" font-size="12" font-weight="bold" fill="#f0606a">$</text></svg><svg class="abs" style="left:171px;top:418px" width="21" height="15" viewBox="0 0 21 15"><rect x="1" y="1" width="19" height="13" fill="#f0a84a" stroke="#4a5f80" stroke-width="1.6"/><path d="M3 12 L8 6.5 L11 9.5 L13.5 7.5 L18 12 Z" fill="#3b6cb4"/><circle cx="13.5" cy="4.8" r="1.4" fill="#3b6cb4"/></svg><div class="abs" style="left:0;top:618px;width:1108px;height:17px;background:#fbfbfb"></div><div class="abs" style="left:30px;top:622px;width:370px;height:11px;border-radius:6px;background:#8b8b8b"></div><svg class="abs" style="left:11px;top:622px" width="9" height="11" viewBox="0 0 9 11"><path d="M9 0 V11 L0 5.5 Z" fill="#8b8b8b"/></svg><svg class="abs" style="left:1092px;top:622px" width="9" height="11" viewBox="0 0 9 11"><path d="M0 0 V11 L9 5.5 Z" fill="#8b8b8b"/></svg>
<!-- FOOTER -->
<div class="hdr" style="top:635px;height:36px;border-top:2px solid #99bbe8"></div><div class="t" style="left:6px;top:646px;font-size:13.5px">Footer</div>
<div class="tool" style="left:1085px;top:644px"><div class="abs" style="left:4px;top:8px;width:9px;height:2px;background:#5f8cc6"></div></div>
<div class="abs" style="left:0;top:671px;width:1108px;height:163px;background:#d6dcf5"></div>
<div class="lbl" style="left:6px;top:679px;color:#000">Internal Contact:</div><div class="lbl" style="left:6px;top:710px;color:#000">Requested By:</div><div class="lbl" style="left:6px;top:741px;color:#000">Authorised By:</div><div class="lbl" style="left:6px;top:773px;color:#9a9da8">Authorized By 2:</div><div class="lbl" style="left:6px;top:804px;color:#000">Received Date:</div><div class="inp" style="left:138px;top:676px;width:275px;line-height:26px;padding-left:3px">Gerrit van Rooyen<div class="trg"><svg width="20" height="25" viewBox="0 0 20 25"><path d="M5.5 10 L10 14.5 L14.5 10" fill="none" stroke="#2a4a9a" stroke-width="2.6"/></svg></div></div><div class="inp" style="left:138px;top:707px;width:275px;line-height:26px;padding-left:3px">Gerrit van Rooyen<div class="trg"><svg width="20" height="25" viewBox="0 0 20 25"><path d="M5.5 10 L10 14.5 L14.5 10" fill="none" stroke="#2a4a9a" stroke-width="2.6"/></svg></div></div><div class="inp" style="left:138px;top:738px;width:275px"></div><div class="inp" style="left:138px;top:769px;width:275px;background:#dfe4f6;border-color:#ccd2e4"></div><div class="lbl" style="left:425px;top:679px">Discount %:</div><div class="inp" style="left:519px;top:676px;width:56px;background:#ffbdbd;border-color:#d8c0cc"></div><div class="lbl" style="left:587px;top:679px">Amt:</div><div class="inp" style="left:631px;top:676px;width:104px;background:#ffbdbd;border-color:#d8c0cc;text-align:right;padding-right:6px">0.00</div><div class="abs" style="left:519px;top:708px;width:152px;height:28px;border:1px solid #d0d0d0;border-radius:3px;background:linear-gradient(#fafafa,#f0f0f0 48%,#dedede 52%,#e8e8e8)"><div class="t" style="left:0;width:150px;text-align:center;top:7px;font-size:13.5px;color:#222">Clear Discount</div></div><div class="lbl" style="left:500px;top:804px">Est.Weight:</div><div class="val" style="left:631px;top:805px">0.00</div><div class="abs" style="left:735px;top:670px;width:1px;height:164px;background:#a9c4ea"></div><div class="lbl" style="left:742px;top:705px">Sub Total:</div><div class="val" style="right:3px;top:705px">500.00</div><div class="lbl" style="left:742px;top:730px">Less Discount:</div><div class="val" style="right:3px;top:730px">0.00</div><div class="lbl" style="left:742px;top:755px">Total Excl VAT:</div><div class="val" style="right:3px;top:755px">500.00</div><div class="lbl" style="left:742px;top:780px">Total VAT:</div><div class="val" style="right:3px;top:780px">75.00</div><div class="val" style="right:3px;top:677px">Cost</div><div class="abs" style="left:742px;top:694px;width:363px;height:1px;background:#111"></div><div class="abs" style="left:742px;top:748px;width:363px;height:1px;background:#111"></div><div class="abs" style="left:742px;top:798px;width:363px;height:1px;background:#111"></div><div class="lbl" style="left:742px;top:805px;font-weight:bold">Total Inc VAT:</div><div class="val" style="right:3px;top:805px;font-weight:bold;font-size:16.5px;letter-spacing:.3px">575.00</div><div class="abs" style="left:0;top:72px;width:1px;height:246px;background:#9dbde9"></div><div class="abs" style="left:0;top:383px;width:1px;height:252px;background:#a9c5ec"></div><div class="abs" style="left:0;top:671px;width:1px;height:162px;background:#a9c5ec"></div><!--MID--></div>
</body></html>
